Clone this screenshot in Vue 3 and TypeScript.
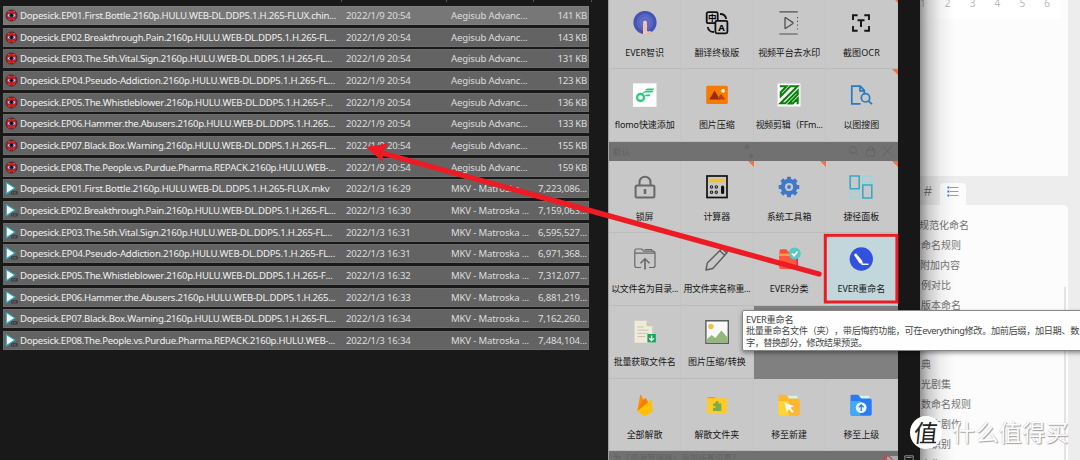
<script setup lang="ts">
import type { Directive } from 'vue'

// Spreads a line of text evenly so that it fills the given width.
const vFit: Directive<HTMLElement, number> = {
  mounted(el, binding) {
    const range = document.createRange()
    range.selectNodeContents(el)
    const natural = range.getBoundingClientRect().width
    const count = Array.from(el.textContent ?? '').length
    if (count > 1) el.style.letterSpacing = `${(binding.value - natural) / count}px`
  },
}

interface FileRow { name: string; width: number; date: string; type: string; size: string; video: boolean }

const names: [string, number][] = [
  ['Dopesick.EP01.First.Bottle.2160p.HULU.WEB-DL.DDP5.1.H.265-FLUX.chin...', 316],
  ['Dopesick.EP02.Breakthrough.Pain.2160p.HULU.WEB-DL.DDP5.1.H.265-FL...', 315.5],
  ['Dopesick.EP03.The.5th.Vital.Sign.2160p.HULU.WEB-DL.DDP5.1.H.265-FL...', 312],
  ['Dopesick.EP04.Pseudo-Addiction.2160p.HULU.WEB-DL.DDP5.1.H.265-FL...', 315],
  ['Dopesick.EP05.The.Whistleblower.2160p.HULU.WEB-DL.DDP5.1.H.265-F...', 312.5],
  ['Dopesick.EP06.Hammer.the.Abusers.2160p.HULU.WEB-DL.DDP5.1.H.265...', 315],
  ['Dopesick.EP07.Black.Box.Warning.2160p.HULU.WEB-DL.DDP5.1.H.265-FL...', 315.5],
  ['Dopesick.EP08.The.People.vs.Purdue.Pharma.REPACK.2160p.HULU.WEB-...', 315],
]
const subSizes = ['141 KB', '143 KB', '131 KB', '123 KB', '136 KB', '133 KB', '155 KB', '159 KB']
const mkvSizes = ['7,223,086...', '7,159,063...', '6,595,527...', '6,971,368...', '7,312,077...', '6,881,219...', '7,162,260...', '7,484,104...']
const mkvTimes = ['16:29', '16:30', '16:31', '16:31', '16:32', '16:33', '16:34', '16:34']

const files: FileRow[] = [
  ...names.map(([name, width], i) => ({ name, width, date: '2022/1/9 20:54', type: 'Aegisub Advanc...', size: subSizes[i], video: false })),
  ...names.map(([name, width], i) => ({
    name: i === 0 ? name.replace('chin...', 'mkv') : name,
    width: i === 0 ? 309.5 : width,
    date: `2022/1/3 ${mkvTimes[i]}`, type: 'MKV - Matroska ...', size: mkvSizes[i], video: true,
  })),
]

const icons: Record<string, string> = {
  touch: '<circle cx="12" cy="11.5" r="11.6" fill="#4653b5"/><circle cx="12" cy="11.3" r="7.8" fill="#5563c0" stroke="#6a76c9" stroke-width=".6"/><circle cx="12" cy="11.3" r="5" fill="#5c69c4" stroke="#7480cd" stroke-width=".6"/><path d="M10 23.200V11.500q0-2 2-2t2 2v8.200q1.500 1.500 2.600 0l2.500 1.500q-3.700 2.300-9.100 2z" fill="#f3c3a5"/>',
  translate: '<g fill="none" stroke="#111" stroke-width="1.8"><rect x="1.700" y="1.200" width="11" height="11" rx="1.500"/><path d="M15 3q5.500 0 6.200 5M9 21q-5.500 0-6.200-5"/><rect x="10.400" y="9.800" width="12" height="12.500" rx="1.500" fill="#c8c8c8"/></g><text x="7.200" y="9.900" font-size="8.500" font-weight="700" text-anchor="middle" font-family="Noto Sans CJK SC">中</text><text x="16.500" y="19.500" font-size="9.500" font-weight="700" text-anchor="middle" font-family="Noto Sans">A</text>',
  play: '<g fill="none" stroke="#505050" stroke-width="1.100"><path d="M2.400.800h18.400M2.400 23h18.400" stroke-width="1.200"/><path d="M8 7v10q0 .8.800.3l6.800-4.600q.9-.7 0-1.300L8.800 6.700Q8 6.300 8 7z" stroke-width="1.300"/><path d="M20.500 6v13" stroke-dasharray="1.200 2.600"/></g>',
  ocr: '<path d="M4 9V4.200h4.600M15.300 4.200h4.700V9M20 15v4.800h-4.700M8.600 19.800H4V15" fill="none" stroke="#151515" stroke-width="1.900"/><path d="M8.500 9.300h7M12 9.300v6.700" stroke="#151515" stroke-width="2"/>',
  flomo: '<path d="M0 .300h23.500v23.500H0z" fill="#fff"/><circle cx="7.500" cy="14.500" r="3.500" fill="none" stroke="#2bcb7a" stroke-width="2.300"/><path d="M9 10.900l2.800-1.500h7.500l1.300-1.700h-7.900q-3.200 1-4 3.500zM12.200 7.200h7.900l1.200-1.800h-6.600q-2.100.3-2.500 1.800zM11.500 13.200l1.500-1.600h4.800l-1.200 1.700z" fill="#2bcb7a"/>',
  picture: '<rect x="1.200" y="2.800" width="21.600" height="18.200" rx="1.500" fill="#f57c00"/><path d="M4.300 16.600l5.300-9 5.200 9z" fill="#972b0b"/><path d="M12 16.600l4-5.600 4.300 5.600z" fill="#c43a10"/><circle cx="18.100" cy="7.800" r="2" fill="#fff5d0"/>',
  ffmpeg: '<path d="M.5.500h23v23H.500z" fill="#fff"/><path d="M2.800 3.200h6.700L3.800 9.200v4L13.300 3.200h7.200L3.500 20.300h4.800L20.700 7.800v3.800l-8.700 8.800h3.800l4.900-4.900v5.800" fill="none" stroke="#078107" stroke-width="2.100"/>',
  search: '<g fill="none" stroke="#277bc2" stroke-width="1.700"><path d="M11.500 20.800H2.800V3.200h8.500l4 4.200v3M11 3.500v4.300h4"/><circle cx="16.500" cy="14.800" r="4.200"/><path d="M19.500 18l3.500 3.200"/></g>',
  lock: '<g fill="none" stroke="#686868" stroke-width="2"><rect x="2.600" y="10.600" width="18.800" height="12" rx="1.500"/><path d="M6.500 10V7.200a5.500 5.500 0 0 1 11 0V10"/><path d="M12 14v5" stroke-width="2.500"/></g>',
  calc: '<rect x="2" y="1" width="20" height="21.500" fill="#c8c8c8" stroke="#111" stroke-width="1.700"/><path d="M4 3.700h16v3.600H4z" fill="#f2c329"/><g fill="none" stroke="#222" stroke-width="1.100"><circle cx="6.500" cy="12" r="1.200"/><circle cx="11.300" cy="12" r="1.200"/><circle cx="6.500" cy="17.200" r="1.200"/><circle cx="11.300" cy="17.200" r="1.200"/></g><rect x="16" y="10.500" width="3.200" height="8.500" rx="1.500" fill="#111"/>',
  gear: '<circle cx="12" cy="12" r="6.200" fill="none" stroke="#4078c9" stroke-width="4.200"/><path d="M12 1.700v4M12 18.300v4M1.700 12h4M18.300 12h4M4.720 4.720l2.800 2.800M16.480 16.480l2.800 2.800M4.720 19.280l2.800-2.800M16.480 7.520l2.800-2.800" stroke="#4078c9" stroke-width="4"/><circle cx="12" cy="12" r="1.900" fill="#4078c9"/>',
  panels: '<g fill="none" stroke-width="1.600"><path stroke="#32acc5" d="M1.200 1h9v12.800h-9zM13.800 10h9v13h-9z"/><path stroke="#9bd4df" d="M13.800 1h9v6.200h-9zM1.200 16.600h9V23h-9z"/></g>',
  folderUp: '<g fill="none" stroke="#686868" stroke-width="1.200"><path d="M8 20.500H3.800q-2 0-2-2V3.500Q1.800 2 3.300 2h5.500l2 2.200H20q2 0 2 2v12.300q0 2-2 2h-4M2.200 6.200H22M19.500 4l-1-1.500h-7"/><path d="M12 22.500V12.300M7.500 16.300l4.500-4.500 4.500 4.500" stroke-width="1.600"/></g>',
  pencil: '<g fill="none" stroke="#5d5d5d" stroke-width="1.400" stroke-linejoin="round"><path d="M1 23l1.300-7L17 1.500q1.500-1.200 3 .3l1.500 1.500q1.500 1.500 0 3L7.800 21.500zM14.800 3.700l5.200 5M17 1.600l5 5"/></g>',
  sort: '<path d="M2.500 4q0-1.800 1.800-1.800h5l2 2.500H20v16.500H4q-1.500 0-1.500-1.500z" fill="#f94d35"/><path d="M3 6.500h17v4H3z" fill="#ff9b4b"/><path d="M2 9h15.500q1.500 0 1.500 1.500V22H4q-2 0-2-2z" fill="#ff5841"/><path d="M20.300 10v9.500" stroke="#d62a78" stroke-width="1.500"/><circle cx="17.700" cy="6.500" r="6" fill="#55c9c2"/><path d="M14.800 6.500l2.200 2.200 3.600-4.200" fill="none" stroke="#fff" stroke-width="1.700"/>',
  rename: '<circle cx="12.300" cy="12" r="11.700" fill="#3152dc"/><path d="M5.200 8.200q-.2-1.700 2-1.700l6 7.200.8 3.400-3.500-.8z" fill="#fff"/><path d="M12.500 17.300h7" stroke="#fff" stroke-width="1.500"/>',
  extract: '<path d="M1.500.8h12.200l5.500 5.500v16.500H1.500z" fill="#f0ead8"/><path d="M13.700.8v5.500h5.500z" fill="#cbc5b4"/><path d="M4.500 7h6M4.500 10.200h11M4.500 13.400h11M4.500 16.500h8" stroke="#c9c3b2"/><path d="M14.400 14h8.400v8.400h-8.400z" fill="#12a65c"/><path d="M18.600 15.500v4.700M16.300 18.200l2.300 2.300 2.300-2.300" fill="none" stroke="#fff" stroke-width="1.300"/>',
  photo: '<path d="M.9.800h22.400v22.400H.900z" fill="#f8fafb" stroke="#5d5d5d" stroke-width="1.400"/><circle cx="5.900" cy="6.500" r="2.700" fill="#edc14d"/><path d="M1.600 19.500l5-4.500 3.800 3 6-7.500 6.200 7v5h-21z" fill="#93b87a"/>',
  flame: '<path d="M4.200 18.300L7.300 1.800q.3-.8.800 0l3 6z" fill="#ff8f00"/><path d="M4.200 18.300l5.500-10.500 2.500-2.500q.5-.6.800.2l3 5z" fill="#f57c00"/><path d="M4.200 18.300L17.600 7q.7-.5 1 .2l1.200 11.200-6.500 4.200q-1.500.7-3 0z" fill="#ffc107"/>',
  puzzle: '<path d="M2 6q0-2 1.500-2h6l2 2z" fill="#ff9800"/><rect x="2" y="5.300" width="20" height="15" rx="1" fill="#ffc928"/><path d="M8 18v-3.200q2.800.4 2.800-.8t-2.800-.8v-2.700h2.500Q10 8 12 8t1.500 2.500h2.800v7.500z" fill="#78ad47"/>',
  cursor: '<path d="M9 2.800h11.500v8H9z" fill="#d1f3f2"/><path d="M1.500 3q0-1.200 1.200-1.200h6.500l3 3.800H21q1.700 0 1.700 1.700V21q0 1.800-1.700 1.800H3q-1.500 0-1.500-1.800z" fill="#ffb52e"/><path d="M1.500 8h10v14.800H3q-1.500 0-1.500-1.800z" fill="#ffd533"/><path d="M7.500 9.500l9.500 3.700-3.600 1.500 3.500 4-1.800 1.400-3.300-4-2 3z" fill="#f4fafc"/>',
  folderBlue: '<path d="M9 2.800h11.500v8H9z" fill="#d1f3f2"/><path d="M1.500 3q0-1.200 1.200-1.200h6.500l3 3.800H21q1.700 0 1.700 1.700V21q0 1.800-1.700 1.800H3q-1.500 0-1.500-1.800z" fill="#287bf5"/><path d="M1.500 8h10v14.800H3q-1.500 0-1.500-1.800z" fill="#41a9f7"/><circle cx="12.200" cy="14.600" r="5.400" fill="#eaf7ff"/><path d="M12.200 18v-6M9.800 14.200l2.400-2.400 2.400 2.400" fill="none" stroke="#287bf5" stroke-width="1.300"/>',
}

interface Tile { label?: string; icon?: string; width?: number; corner?: boolean; active?: boolean }

const topTiles: Tile[] = [
  { label: 'EVER智识', icon: 'touch', width: 39 },
  { label: '翻译终极版', icon: 'translate', width: 45 },
  { label: '视频平台去水印', icon: 'play', width: 62 },
  { label: '截图OCR', icon: 'ocr', width: 37, corner: true },
  { label: 'flomo快速添加', icon: 'flomo', width: 60 },
  { label: '图片压缩', icon: 'picture', width: 36 },
  { label: '视频剪辑（FFm...', icon: 'ffmpeg', width: 67 },
  { label: '以图搜图', icon: 'search', width: 36, corner: true },
]
const mainTiles: Tile[] = [
  { label: '锁屏', icon: 'lock', width: 18 },
  { label: '计算器', icon: 'calc', width: 27, corner: true },
  { label: '系统工具箱', icon: 'gear', width: 45, corner: true },
  { label: '捷径面板', icon: 'panels', width: 36, corner: true },
  { label: '以文件名为目录...', icon: 'folderUp', width: 67 },
  { label: '用文件夹名称重...', icon: 'pencil', width: 67 },
  { label: 'EVER分类', icon: 'sort', width: 39 },
  { label: 'EVER重命名', icon: 'rename', width: 48, active: true },
  { label: '批量获取文件名', icon: 'extract', width: 62 },
  { label: '图片压缩/转换', icon: 'photo', width: 58 },
  {},
  {},
  { label: '全部解散', icon: 'flame', width: 36 },
  { label: '解散文件夹', icon: 'puzzle', width: 45 },
  { label: '移至新建', icon: 'cursor', width: 36 },
  { label: '移至上级', icon: 'folderBlue', width: 36 },
]
const sections = [
  { key: 'top', tiles: topTiles },
  { key: 'main', tiles: mainTiles },
]
const outline = ['规范化命名', '命名规则', '附加内容', '例对比', '版本命名', '', '', '典', '光剧集', '数命名规则', '版本剧作', '组识别', '本集']
</script>

<template>
  <div class="screen">
    <section class="files">
      <div class="heads"><i /><i /><i /><i /></div>
      <div v-for="(f, i) in files" :key="i" class="file" :class="{ hot: i === 0 }">
        <div class="bar">
          <svg v-if="!f.video" class="ficon" viewBox="0 0 13 13">
            <circle cx="6.500" cy="6.500" r="5.500" fill="#c42222" stroke="#3c1f22" stroke-width=".9" />
            <path d="M3.300 3l1-1M9.700 3l-1-1M3.500 10.300l1 .8M9.500 10.300l-1 .8" stroke="#e86a66" />
            <ellipse cx="6.500" cy="6.500" rx="3.800" ry="1.400" fill="#c9d3ee" />
            <circle cx="6.500" cy="6.300" r="2.100" fill="#1c2c66" />
            <circle cx="6.500" cy="6" r="1.200" fill="#050712" />
          </svg>
          <svg v-else class="ficon" viewBox="0 0 13 13">
            <path d="M1.300.6L9.900 6 1.300 11.800z" fill="#fff" stroke="#2badc2" stroke-width="1.100" />
            <rect x="6" y="9.200" width="6.800" height="3.300" rx=".8" fill="#393d3f" />
            <path d="M7.200 10.900h4.500" stroke="#999" stroke-width=".7" stroke-dasharray="1 .5" />
          </svg>
          <span class="name"><span v-fit="f.width">{{ f.name }}</span></span>
          <span class="date"><span v-fit="64.500">{{ f.date }}</span></span>
          <span class="type"><span v-fit="f.video ? 78 : 76.500">{{ f.type }}</span></span>
          <span class="size"><span v-fit="f.video ? 49 : 29.500">{{ f.size }}</span></span>
        </div>
      </div>
    </section>

    <section class="panel">
      <template v-for="s in sections" :key="s.key">
        <div class="tiles" :class="s.key">
          <div v-for="(t, i) in s.tiles" :key="i" class="tile" :class="{ empty: !t.label, active: t.active, corner: t.corner }">
            <template v-if="t.label">
              <svg class="ticon" viewBox="0 0 24 24" v-html="icons[t.icon!]" />
              <span class="label"><span v-fit="t.width!">{{ t.label }}</span></span>
            </template>
          </div>
        </div>
        <div v-if="s.key === 'top'" class="strip">
          <span>默认</span>
          <svg class="dots" viewBox="0 0 10 14"><circle cx="3" cy="3" r="1.500" /><circle cx="7" cy="12" r="1.500" /></svg>
          <svg class="tools" viewBox="0 0 46 14">
            <circle cx="5" cy="6" r="3.500" /><path d="M7.500 8.500l3.500 4M18.500 6h8v6h-8zM20 6V4q2.500-3 5 0v2M35 2l9 10M44 2l-9 10" />
          </svg>
        </div>
      </template>
      <div class="strip foot">
        <span>为『资源管理器』添加场景设置?</span>
        <svg class="ban" viewBox="0 0 18 6">
          <path d="M7 1h11v5H7z" fill="#a9a9a9" stroke="none" />
          <circle cx="7" cy="6" r="5" stroke="#c9464a" stroke-width="1.200" /><path d="M4 2.500L8 6" stroke="#c9464a" stroke-width="1.200" />
        </svg>
      </div>
    </section>

    <div class="edge"><div class="tray"><svg viewBox="0 0 12 6"><path d="M1 6V1h10v5M3 3h6" /></svg></div></div>

    <aside class="doc">
      <div class="page"><div class="months"><span v-for="n in 6" :key="n">{{ n }}</span></div></div>
      <div class="tabs">
        <span class="hash">#</span>
        <div class="tab">
          <svg viewBox="0 0 12 11">
            <path d="M3 1.500h8.500M3 5.500h8.500M3 9.500h8.500" stroke="#65aae8" stroke-width="1.200" />
            <path d="M.5 1.500H2.300M.5 5.500H2.300M.5 9.500H2.300" stroke="#1f7fda" stroke-width="2" />
          </svg>
        </div>
      </div>
      <div class="outline">
        <div v-for="(o, i) in outline" :key="i" class="item">{{ o }}</div>
        <div class="thumb" />
      </div>
      <div class="shade" />
    </aside>

    <div class="tooltip">
      <div><span v-fit="47.500">EVER重命名</span></div>
      <div><span v-fit="333">批量重命名文件（夹），带后悔药功能，可在everything修改。加前后缀，加日期、数</span></div>
      <div><span v-fit="121">字，替换部分，修改结果预览。</span></div>
    </div>

    <svg class="marks" viewBox="0 0 1080 460">
      <path d="M819 274L380 152.500" stroke="#ed1c24" stroke-width="5.400" stroke-linecap="round" />
      <path d="M365.500 147l22.500-3.500-4.500 8.500-1 9.500z" fill="#ed1c24" />
      <rect x="825.300" y="235.300" width="71.600" height="66.700" fill="none" stroke="#ed1c24" stroke-width="3" />
    </svg>

    <div class="watermark">
      <div class="coin"><span>值</span></div>
      <div class="words"><span v-fit="117">什么值得买</span></div>
    </div>
  </div>
</template>

<style>
body { margin: 0; background: #191919; }
</style>

<style scoped>
.screen {
  position: relative;
  display: flex;
  width: 1080px;
  height: 460px;
  overflow: hidden;
  background: #191919;
  font-family: "Noto Sans", "Noto Sans CJK SC", sans-serif;
  text-spacing-trim: space-all;
  font-kerning: none;
  white-space: nowrap;
}
.files { width: 608px; flex: none; box-sizing: border-box; padding-left: 3px; }
.heads { display: grid; grid-template-columns: 339px 105px 87px 58px; height: 6px; }
.heads i { width: 1px; height: 2px; background: #555; justify-self: end; }
.file { height: 21.670px; }
.bar {
  display: flex;
  align-items: center;
  width: 586px;
  height: 19px;
  box-sizing: border-box;
  border: 1px solid #6c6c6c;
  background: #636363;
  color: #f0f0f0;
  font-size: 9.600px;
  line-height: 16px;
}
.hot .bar { background: #777; border-color: #808080; }
.bar > span { padding-top: 1px; }
.ficon { width: 13px; height: 13px; margin-left: 1px; flex: none; }
.name { width: 326px; padding-left: 2px; box-sizing: border-box; flex: none; }
.date { width: 105px; padding-left: 2px; box-sizing: border-box; flex: none; color: #ddd; }
.type { width: 80px; padding-left: 2px; box-sizing: border-box; flex: none; color: #ddd; }
.size { flex: 1; text-align: right; padding-right: 1px; color: #ddd; }

.panel { width: 290px; flex: none; box-sizing: border-box; border-left: 1px solid #a2a2a2; background: #717171; }
.tiles { display: grid; grid-template-columns: repeat(4, 1fr); grid-auto-rows: 72.700px; }
.tiles.top { height: 142px; overflow: hidden; align-content: end; }
.tile {
  position: relative;
  display: flex;
  flex-direction: column;
  align-items: center;
  box-sizing: border-box;
  padding-top: 14px;
  background: #c8c8c8;
  border-right: 1px solid #c3c3c3;
  border-bottom: 1px solid #bcbcbc;
}
.tile.empty { background: #808080; border-color: #808080; }
.tile.active { background: #c2d7dc; }
.tile.corner::after {
  content: "";
  position: absolute;
  top: 0;
  right: -1px;
  border: 3.500px solid transparent;
  border-top-color: #f5703a;
  border-right-color: #f5703a;
}
.ticon { width: 24px; height: 24px; flex: none; }
.label { margin-top: 10px; font-size: 9px; line-height: 15px; color: #161616; }
.strip { display: flex; align-items: center; height: 18.500px; padding: 0 4px; font-size: 8.500px; color: #626262; }
.strip svg { fill: none; stroke: #646464; }
.dots { width: 10px; height: 14px; margin-left: 114px; }
.tools { width: 46px; height: 14px; margin-left: auto; }
.foot { height: 9px; overflow: hidden; padding-right: 0; align-items: flex-start; line-height: 14px; }
.ban { width: 18px; height: 6px; margin: 4px 0 0 auto; }

.edge { width: 22px; flex: none; background: #171717; display: flex; align-items: flex-end; }
.tray { margin-left: 5px; height: 5px; }
.tray svg { display: block; width: 12px; height: 5px; fill: none; stroke: #aaa; }

.doc { position: relative; flex: 1; background: #ededed; overflow: hidden; }
.page { width: 148px; height: 176px; background: #fcfcfc; }
.months {
  display: flex;
  justify-content: space-between;
  width: 130px;
  height: 19px;
  padding: 0 11px 0 0;
  background: #fff;
  color: #bababa;
  font-size: 10px;
  line-height: 6px;
}
.tabs { display: flex; height: 29px; align-items: flex-end; }
.hash { width: 16px; padding-left: 4px; margin-right: 1px; box-sizing: border-box; font: 14px/27px "Liberation Sans", sans-serif; color: #777; }
.tab { display: flex; justify-content: center; width: 26px; height: 22px; margin-left: 3px; border-radius: 4px 4px 0 0; background: #fcfcfc; }
.tab svg { width: 12px; height: 11px; margin-top: 3px; }
.outline { position: relative; width: 148px; height: 255px; padding-top: 10px; box-sizing: border-box; background: #fcfcfc; border-radius: 0 5px 0 0; }
.item { height: 19.930px; font-size: 10px; line-height: 20px; color: #747474; padding-left: 1px; }
.item:first-child { margin-left: -2px; }
.item:nth-child(3) { margin-left: -1px; }
.thumb { position: absolute; right: 2px; top: 82px; width: 2px; height: 180px; background: #e3e3e3; }
.shade {
  position: absolute;
  inset: 0 auto 0 0;
  width: 34px;
  background: linear-gradient(90deg, rgba(0, 0, 0, .42), rgba(0, 0, 0, .2) 25%, rgba(0, 0, 0, .06) 60%, transparent);
}

.tooltip {
  position: absolute;
  left: 742px;
  top: 310px;
  width: 345px;
  height: 41px;
  box-sizing: border-box;
  padding: 3px 0 0 3px;
  border: 1px solid #868686;
  border-radius: 2px;
  background: #fefefe;
  box-shadow: 0 2px 4px rgba(0, 0, 0, .4);
  color: #444;
  font-size: 9.200px;
  line-height: 11.400px;
}
.marks { position: absolute; inset: 0; width: 1080px; height: 460px; }
.watermark { position: absolute; left: 910px; top: 416px; display: flex; align-items: center; }
.coin {
  width: 32px;
  height: 33px;
  border-radius: 50%;
  background: #fff;
  color: #222;
  font: 24px/31px "Noto Sans CJK SC", sans-serif;
  text-align: center;
}
.coin span { display: inline-block; transform: skewX(-6deg); }
.words {
  margin-left: 10px;
  color: #fff;
  font-size: 23px;
  line-height: 33px;
  text-shadow: 1px 1px 1px #a0a0a0, 0 0 1px #b0b0b0;
}
</style>
